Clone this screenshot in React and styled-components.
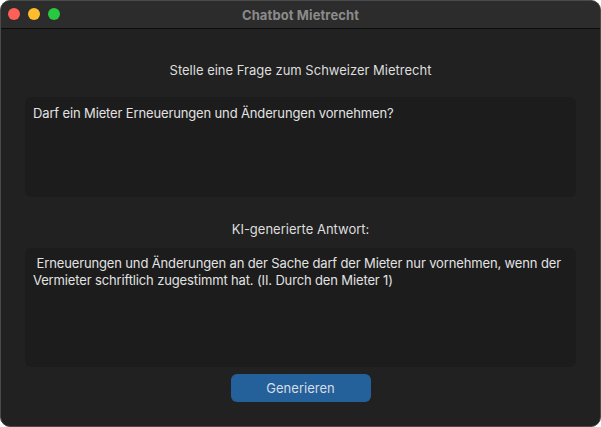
import React from 'react'
import styled, { createGlobalStyle } from 'styled-components'

const GlobalStyle = createGlobalStyle`
  html, body {
    margin: 0;
    padding: 0;
    background: #ffffff;
  }
  body {
    font-family: Inter, "Noto Sans", "Liberation Sans", sans-serif;
  }
`;

const StyledWindow = styled.div`
  width: 601px;
  height: 427px;
  box-sizing: border-box;
  border-radius: 10px;
  overflow: hidden;
  background-color: #212121;
  border: 1px solid #4a4a4a;
  display: flex;
  flex-direction: column;
`;

const StyledTitleBar = styled.div`
  height: 27px;
  flex-shrink: 0;
  background-color: #2c2c2c;
  border-bottom: 1px solid #0c0c0c;
  position: relative;
  display: flex;
  align-items: center;
  justify-content: center;
`;

const StyledLights = styled.div`
  position: absolute;
  left: 7px;
  top: 7px;
  display: flex;
  gap: 8px;
`;

const StyledLight = styled.span`
  width: 12px;
  height: 12px;
  border-radius: 50%;
  background-color: ${props => props.color};
`;

const StyledTitle = styled.span`
  color: #8b8b8b;
  font-size: 13px;
  font-weight: 700;
  letter-spacing: 0.1px;
`;

const StyledContent = styled.div`
  flex: 1;
  display: flex;
  flex-direction: column;
  align-items: center;
  padding: 33px 24px 0;
`;

const StyledLabel = styled.div`
  color: #dedede;
  font-size: 13px;
  line-height: 16px;
  height: 16px;
  margin: ${props => props.margin};
`;

const StyledBox = styled.div`
  align-self: stretch;
  box-sizing: border-box;
  height: ${props => props.height}px;
  background-color: #1c1c1c;
  border-radius: 6px;
  padding: ${props => props.padding};
  color: #e2e2e2;
  font-size: 13px;
  line-height: 17px;
  letter-spacing: -0.14px;
  white-space: pre-wrap;
`;

const StyledButton = styled.button`
  margin-top: 7px;
  width: 140px;
  height: 28px;
  border: 0;
  border-radius: 6px;
  background-color: #24609a;
  color: #d6dde6;
  font-family: inherit;
  font-size: 13px;
  cursor: pointer;
`;

export default function App() {
  return (
    <>
      <GlobalStyle />
      <StyledWindow>
        <StyledTitleBar>
          <StyledLights>
            <StyledLight color="#fe5f57" />
            <StyledLight color="#febc2e" />
            <StyledLight color="#28c840" />
          </StyledLights>
          <StyledTitle>Chatbot Mietrecht</StyledTitle>
        </StyledTitleBar>
        <StyledContent>
          <StyledLabel margin="0 0 19px">Stelle eine Frage zum Schweizer Mietrecht</StyledLabel>
          <StyledBox height={100} padding="8px 4px 8px 8px">
            Darf ein Mieter Erneuerungen und Änderungen vornehmen?
          </StyledBox>
          <StyledLabel margin="24px 0 11px">KI-generierte Antwort:</StyledLabel>
          <StyledBox height={119} padding="7px 2px 7px 8px">
            {' Erneuerungen und Änderungen an der Sache darf der Mieter nur vornehmen, wenn der\nVermieter schriftlich zugestimmt hat. (II. Durch den Mieter 1)'}
          </StyledBox>
          <StyledButton>Generieren</StyledButton>
        </StyledContent>
      </StyledWindow>
    </>
  )
}
